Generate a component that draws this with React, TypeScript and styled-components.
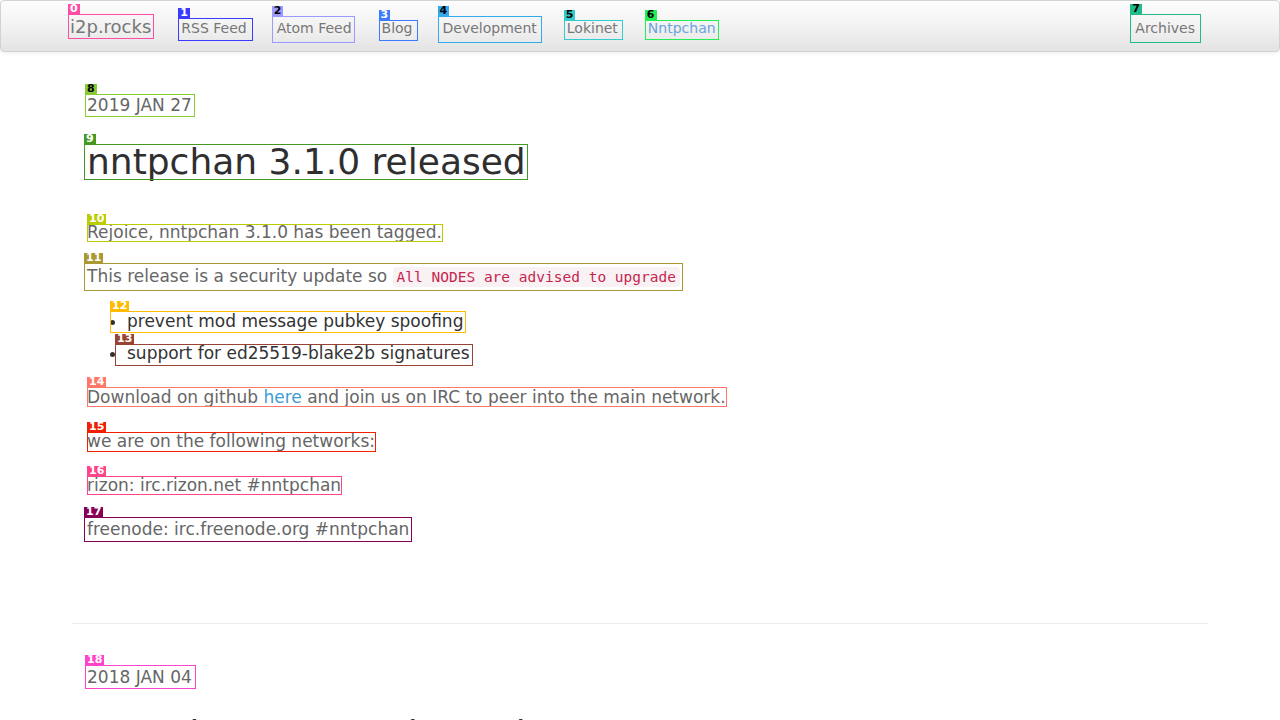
import React from 'react';
import styled, { createGlobalStyle } from 'styled-components';

const Global = createGlobalStyle`
  html, body { margin: 0; padding: 0; background: #fff; }
  body { font-family: "DejaVu Sans", "Noto Sans", sans-serif; color: #333; overflow: hidden; }
  * { box-sizing: border-box; }
`;

type Box = [number, number, number, number];

const MarkWrap = styled.span`
  position: relative;
  display: inline-block;
`;

const Outline = styled.span<{ $c: string; $t: number; $r: number; $b: number; $l: number }>`
  position: absolute;
  top: ${(p) => -p.$t}px;
  right: ${(p) => -p.$r}px;
  bottom: ${(p) => -p.$b}px;
  left: ${(p) => -p.$l}px;
  border: 1px solid ${(p) => p.$c};
  pointer-events: none;
`;

const Tag = styled.span<{ $c: string; $fg: string; $t: number; $l: number }>`
  position: absolute;
  left: ${(p) => -p.$l}px;
  top: ${(p) => -p.$t - 10}px;
  height: 10px;
  padding: 0 2px;
  background: ${(p) => p.$c};
  color: ${(p) => p.$fg};
  font: bold 11px/10px "DejaVu Sans", sans-serif;
  white-space: nowrap;
`;

const Mark: React.FC<{ n: number; c: string; fg?: string; box: Box; children: React.ReactNode }> = ({
  n,
  c,
  fg = '#fff',
  box,
  children,
}) => {
  const [t, r, b, l] = box;
  return (
    <MarkWrap>
      {children}
      <Outline $c={c} $t={t} $r={r} $b={b} $l={l} />
      <Tag $c={c} $fg={fg} $t={t} $l={l}>
        {n}
      </Tag>
    </MarkWrap>
  );
};

/* ---------- navbar ---------- */

const Navbar = styled.nav`
  height: 52px;
  border: 1px solid #d2d2d2;
  border-radius: 4px;
  background: linear-gradient(to bottom, #fdfdfd 0%, #f1f1f1 55%, #e3e3e3 100%);
  box-shadow: inset 0 1px 0 rgba(255, 255, 255, 0.6), 0 1px 4px rgba(0, 0, 0, 0.07);
`;

const NavInner = styled.div`
  width: 1170px;
  height: 100%;
  margin: 0 auto;
  padding: 0 15px;
  display: flex;
  align-items: flex-start;
`;

const Brand = styled.a`
  display: block;
  padding: 16px 15px 14px;
  margin-left: -15px;
  font-size: 18px;
  line-height: 20px;
  color: #777;
  text-decoration: none;
`;

const NavList = styled.ul`
  display: flex;
  list-style: none;
  margin: 0;
  padding: 0;
`;

const NavRight = styled(NavList)`
  margin-left: auto;
`;

const NavLink = styled.a<{ $active?: boolean }>`
  display: block;
  padding: 17px 15px 13px;
  font-size: 14px;
  line-height: 20px;
  color: ${(p) => (p.$active ? '#6aa5dc' : '#777')};
  text-decoration: none;
`;

/* ---------- content ---------- */

const Container = styled.main`
  width: 1170px;
  margin: 0 auto;
  padding: 0 15px;
`;

const Article = styled.article`
  padding: 41px 17px 62px;
`;

const DateLine = styled.div`
  font-size: 17px;
  line-height: 24px;
  color: #666;
`;

const Title = styled.h1`
  margin: 25px 0 38px;
  font-size: 36px;
  line-height: 40px;
  font-weight: 500;
  color: #2f2f2f;
`;

const Para = styled.p`
  margin: 0 0 20px;
  font-size: 17px;
  line-height: 24px;
  color: #666;
`;

const Code = styled.code`
  font-family: "DejaVu Sans Mono", monospace;
  font-size: 14.5px;
  padding: 2px 4px;
  color: #c7254e;
  background: #f9f2f4;
  border-radius: 4px;
`;

const Link = styled.a`
  color: #3e9bd8;
  text-decoration: none;
`;

const List = styled.ul`
  margin: 0 0 20px;
  padding-left: 40px;
  font-size: 17px;
  line-height: 24px;
  color: #333;
`;

const Item = styled.li`
  margin-bottom: 8px;
  &:last-child { margin-bottom: 0; }
`;

const Rule = styled.hr`
  border: 0;
  border-top: 1px solid #eaeaea;
  margin: 0 2px;
`;

export default function App() {
  return (
    <>
      <Global />
      <Navbar>
        <NavInner>
          <Brand>
            <Mark n={0} c="#ff4da6" box={[3, 3, 2, 2]}>
              i2p.rocks
            </Mark>
          </Brand>
          <NavList>
            <li>
              <NavLink>
                <Mark n={1} c="#3b3bff" box={[0, 6, 3, 3]}>
                  RSS Feed
                </Mark>
              </NavLink>
            </li>
            <li>
              <NavLink>
                <Mark n={2} c="#9a9aff" fg="#000" box={[2, 3, 5, 5]}>
                  Atom Feed
                </Mark>
              </NavLink>
            </li>
            <li>
              <NavLink>
                <Mark n={3} c="#3a7bff" box={[-2, 5, 3, 3]}>
                  Blog
                </Mark>
              </NavLink>
            </li>
            <li>
              <NavLink>
                <Mark n={4} c="#33aaee" fg="#000" box={[2, 5, 5, 5]}>
                  Development
                </Mark>
              </NavLink>
            </li>
            <li>
              <NavLink>
                <Mark n={5} c="#33cccc" fg="#000" box={[-2, 5, 2, 3]}>
                  Lokinet
                </Mark>
              </NavLink>
            </li>
            <li>
              <NavLink $active>
                <Mark n={6} c="#22ee55" fg="#000" box={[-2, 3, 2, 3]}>
                  Nntpchan
                </Mark>
              </NavLink>
            </li>
          </NavList>
          <NavRight>
            <li>
              <NavLink>
                <Mark n={7} c="#22bb88" fg="#000" box={[4, 6, 5, 5]}>
                  Archives
                </Mark>
              </NavLink>
            </li>
          </NavRight>
        </NavInner>
      </Navbar>

      <Container>
        <Article>
          <DateLine>
            <Mark n={8} c="#88cc33" fg="#000" box={[-1, 3, 0, 2]}>
              2019 JAN 27
            </Mark>
          </DateLine>
          <Title>
            <Mark n={9} c="#449922" box={[-2, 2, -2, 3]}>
              nntpchan 3.1.0 released
            </Mark>
          </Title>
          <Para>
            <Mark n={10} c="#bbcc00" box={[-4, 1, -2, 0]}>
              Rejoice, nntpchan 3.1.0 has been tagged.
            </Mark>
          </Para>
          <Para>
            <Mark n={11} c="#aa9933" box={[1, 3, 2, 3]}>
              This release is a security update so <Code>All NODES are advised to upgrade</Code>
            </Mark>
          </Para>
          <List>
            <Item>
              <Mark n={12} c="#ffbb00" box={[-2, 3, 0, 17]}>
                prevent mod message pubkey spoofing
              </Mark>
            </Item>
            <Item>
              <Mark n={13} c="#994433" box={[-3, 3, 1, 12]}>
                support for ed25519-blake2b signatures
              </Mark>
            </Item>
          </List>
          <Para>
            <Mark n={14} c="#ff7766" box={[-2, 1, -2, 0]}>
              Download on github <Link>here</Link> and join us on IRC to peer into the main network.
            </Mark>
          </Para>
          <Para>
            <Mark n={15} c="#ee2200" box={[-3, 1, -1, 0]}>
              we are on the following networks:
            </Mark>
          </Para>
          <Para>
            <Mark n={16} c="#ff4488" box={[-3, 1, -2, 0]}>
              rizon: irc.rizon.net #nntpchan
            </Mark>
          </Para>
          <Para>
            <Mark n={17} c="#880055" box={[0, 3, 1, 3]}>
              freenode: irc.freenode.org #nntpchan
            </Mark>
          </Para>
        </Article>
        <Rule />
        <Article>
          <DateLine>
            <Mark n={18} c="#ff44cc" box={[0, 4, 0, 2]}>
              2018 JAN 04
            </Mark>
          </DateLine>
          <Title>nntpchan 3.0.0 released</Title>
        </Article>
      </Container>
    </>
  );
}
